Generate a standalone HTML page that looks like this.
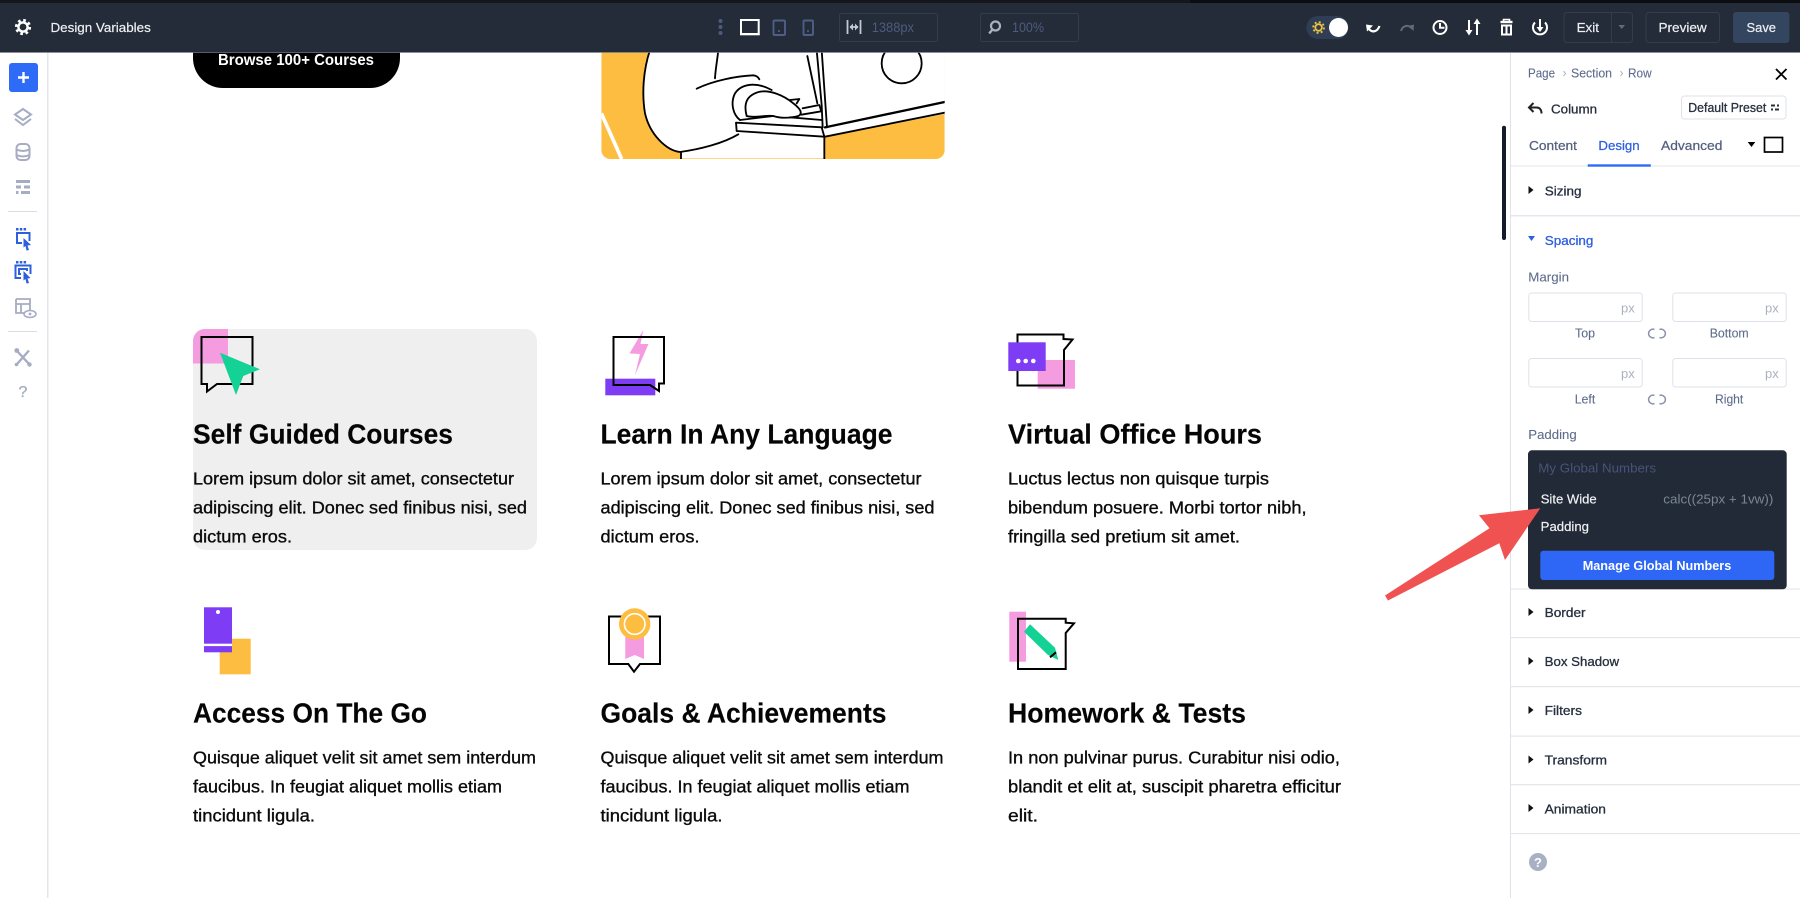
<!DOCTYPE html>
<html lang="en"><head><meta charset="utf-8"><title>Design Variables</title>
<style>
html,body{margin:0;padding:0;background:#fff;width:1800px;height:898px;overflow:hidden}
svg{display:block}
text{font-family:"Liberation Sans",Arial,sans-serif}
.t{font-size:28px;font-weight:700;fill:#050505;stroke:#050505;stroke-width:.15}
.b{font-size:17.5px;fill:#0b0b0b;stroke:#0b0b0b;stroke-width:.35}
.p{font-size:13px;fill:#27303f;stroke:#27303f;stroke-width:.3}
.g{font-size:13px;fill:#5f6c8c;stroke:#5f6c8c;stroke-width:.1}
.s{font-size:12.5px;fill:#5f6c8c;stroke:#5f6c8c;stroke-width:.1}
.w{font-size:13px;fill:#eef0f3;stroke:#eef0f3;stroke-width:.2}
</style></head><body>
<svg width="1800" height="898" viewBox="0 0 1800 898" xmlns="http://www.w3.org/2000/svg">
<rect width="1800" height="898" fill="#fff"/>

<!-- illustration, drawn in 3x crop coordinates -->
<g transform="translate(590,40) scale(.33333)">
<clipPath id="ic"><rect x="34" y="20" width="1030" height="337" rx="27"/></clipPath>
<g clip-path="url(#ic)">
<rect x="34" y="20" width="1030" height="337" fill="#fdbd40"/>
<path d="M180,20 C160,90 155,160 165,220 C180,285 230,332 272,337 L272,355 L703,355 L703,290 L1064,222 L1064,20 Z" fill="#fff"/>
<path d="M34,220 L95,357" stroke="#fff" stroke-width="11" fill="none"/>
<g fill="none" stroke="#000" stroke-width="5.5" stroke-linecap="round" stroke-linejoin="round">
<path d="M180,30 C160,90 155,160 165,220 C180,285 230,332 270,336 C330,328 400,310 445,283"/>
<path d="M273,336 V357"/>
<path d="M385,30 C382,60 376,90 375,115"/>
<path d="M320,146 C370,122 440,108 490,106 C500,107 505,112 508,118"/>
<path d="M545,150 C500,125 455,130 435,160 C420,190 430,225 450,240"/>
<path d="M470,228 C460,190 470,165 510,155 C540,150 580,165 610,190 C630,205 640,220 625,228 C600,235 570,235 550,228 C530,225 490,235 470,228"/>
<path d="M600,180 L628,177 L620,190"/>
<path d="M438,248 L695,262 L703,290 L440,273 Z"/>
<path d="M450,240 L550,228 M600,232 L695,240 M638,205 L688,195 L694,214 L634,224"/>
<path d="M652,48 L682,190"/>
<path d="M680,30 L695,195 L698,262"/>
<path d="M695,30 L711,262"/>
<path d="M705,262 L1064,186" stroke-width="7"/>
<path d="M705,290 L1064,218"/>
<path d="M703,290 V357"/>
<ellipse cx="935" cy="70" rx="60" ry="60"/>
</g></g></g>

<!-- button -->
<rect x="193" y="20" width="207" height="68" rx="30" fill="#000"/>
<text x="218" y="65" font-size="15.5" font-weight="700" fill="#fff" textLength="156" lengthAdjust="spacingAndGlyphs">Browse 100+ Courses</text>

<!-- card 1 -->
<rect x="193" y="329" width="344" height="221" rx="12" fill="#efefef"/>
<path d="M205,329 H228 V363.500 H193 V341 A12,12 0 0 1 205,329 Z" fill="#f59be0"/>
<path d="M201.500,337 H252.500 V384 H217 L207,391.500 V384 H201.500 Z" fill="none" stroke="#000" stroke-width="2"/>
<path d="M220,352.700 L260,369.300 L243.300,376 L236,395 Z" fill="#14d196"/>

<!-- card 2 icon -->
<rect x="605.300" y="378.700" width="50" height="16.600" fill="#7f3cf5"/>
<path d="M643.300,330 L629.500,353.500 L640,354 L635,375 L648.500,344 L640.500,344 Z" fill="#f59be0"/>
<path d="M613.500,337 H664 V383.500 H659 V391 L650,385 H613.500 Z" fill="none" stroke="#000" stroke-width="2"/>

<!-- card 3 icon -->
<rect x="1037.700" y="360" width="37.300" height="28.700" fill="#f59be0"/>
<path d="M1017.500,334.500 H1063.500 V339 L1072.500,339.500 L1064,350 V385.500 H1017.500 Z" fill="none" stroke="#000" stroke-width="2"/>
<rect x="1008.300" y="342.300" width="37.400" height="28.700" fill="#7f3cf5"/>
<circle cx="1018.300" cy="361" r="2.300" fill="#fff"/><circle cx="1025.700" cy="361" r="2.300" fill="#fff"/><circle cx="1033.300" cy="361" r="2.300" fill="#fff"/>

<!-- card 4 icon -->
<rect x="219.700" y="638.700" width="31" height="35.600" fill="#fdbd40"/>
<rect x="204" y="607.300" width="28" height="45" fill="#7f3cf5"/>
<rect x="204" y="643.700" width="28" height="2.400" fill="#fff"/>
<circle cx="218" cy="612" r="2" fill="#fff"/>

<!-- card 5 icon -->
<path d="M609,616.500 H660 V664 H640 L634,671.700 L628.300,664 H609 Z" fill="none" stroke="#000" stroke-width="2"/>
<path d="M625.300,636 H644 V659 L634.700,655 L625.300,659 Z" fill="#f59be0"/>
<circle cx="634.700" cy="624" r="15.700" fill="#fdbd40"/>
<circle cx="634.700" cy="624" r="10.300" fill="#fdbd40" stroke="#fff" stroke-width="1.600"/>

<!-- card 6 icon -->
<rect x="1009.300" y="611.700" width="16.700" height="50" fill="#f59be0"/>
<path d="M1018,618.700 H1065.700 V622.700 L1074,623.300 L1065.700,633 V669 H1018 Z" fill="none" stroke="#000" stroke-width="2"/>
<path d="M1024,631.700 L1030,624.300 L1055,647.700 L1058.300,660 L1048,655 Z" fill="#14d196"/>
<path d="M1050,657.300 L1056,652.300" stroke="#000" stroke-width="2"/>

<!-- titles + text -->
<text class="t" x="193" y="443.500" textLength="260" lengthAdjust="spacingAndGlyphs">Self Guided Courses</text>
<text class="b" x="193" y="484.500" textLength="321" lengthAdjust="spacingAndGlyphs">Lorem ipsum dolor sit amet, consectetur</text>
<text class="b" x="193" y="513.500" textLength="334" lengthAdjust="spacingAndGlyphs">adipiscing elit. Donec sed finibus nisi, sed</text>
<text class="b" x="193" y="542.500" textLength="99" lengthAdjust="spacingAndGlyphs">dictum eros.</text>

<text class="t" x="600.500" y="443.500" textLength="292" lengthAdjust="spacingAndGlyphs">Learn In Any Language</text>
<text class="b" x="600.500" y="484.500" textLength="321" lengthAdjust="spacingAndGlyphs">Lorem ipsum dolor sit amet, consectetur</text>
<text class="b" x="600.500" y="513.500" textLength="334" lengthAdjust="spacingAndGlyphs">adipiscing elit. Donec sed finibus nisi, sed</text>
<text class="b" x="600.500" y="542.500" textLength="99" lengthAdjust="spacingAndGlyphs">dictum eros.</text>

<text class="t" x="1008" y="443.500" textLength="254" lengthAdjust="spacingAndGlyphs">Virtual Office Hours</text>
<text class="b" x="1008" y="484.500" textLength="261" lengthAdjust="spacingAndGlyphs">Luctus lectus non quisque turpis</text>
<text class="b" x="1008" y="513.500" textLength="298.500" lengthAdjust="spacingAndGlyphs">bibendum posuere. Morbi tortor nibh,</text>
<text class="b" x="1008" y="542.500" textLength="232" lengthAdjust="spacingAndGlyphs">fringilla sed pretium sit amet.</text>

<text class="t" x="193" y="722.500" textLength="234" lengthAdjust="spacingAndGlyphs">Access On The Go</text>
<text class="b" x="193" y="763.500" textLength="343" lengthAdjust="spacingAndGlyphs">Quisque aliquet velit sit amet sem interdum</text>
<text class="b" x="193" y="792.500" textLength="309" lengthAdjust="spacingAndGlyphs">faucibus. In feugiat aliquet mollis etiam</text>
<text class="b" x="193" y="821.500" textLength="122" lengthAdjust="spacingAndGlyphs">tincidunt ligula.</text>

<text class="t" x="600.500" y="722.500" textLength="286" lengthAdjust="spacingAndGlyphs">Goals &amp; Achievements</text>
<text class="b" x="600.500" y="763.500" textLength="343" lengthAdjust="spacingAndGlyphs">Quisque aliquet velit sit amet sem interdum</text>
<text class="b" x="600.500" y="792.500" textLength="309" lengthAdjust="spacingAndGlyphs">faucibus. In feugiat aliquet mollis etiam</text>
<text class="b" x="600.500" y="821.500" textLength="122" lengthAdjust="spacingAndGlyphs">tincidunt ligula.</text>

<text class="t" x="1008" y="722.500" textLength="238" lengthAdjust="spacingAndGlyphs">Homework &amp; Tests</text>
<text class="b" x="1008" y="763.500" textLength="332" lengthAdjust="spacingAndGlyphs">In non pulvinar purus. Curabitur nisi odio,</text>
<text class="b" x="1008" y="792.500" textLength="333" lengthAdjust="spacingAndGlyphs">blandit et elit at, suscipit pharetra efficitur</text>
<text class="b" x="1008" y="821.500" textLength="30" lengthAdjust="spacingAndGlyphs">elit.</text>

<!-- scrollbar -->
<rect x="1502" y="125.700" width="4" height="114.300" rx="2" fill="#141b2d"/>

<!-- left sidebar -->
<rect x="0" y="52" width="47" height="846" fill="#fff"/>
<rect x="47" y="52" width="1.500" height="846" fill="#e4e6eb"/>
<rect x="9" y="63" width="29" height="29" rx="3" fill="#2e6bf6"/>
<path d="M23.500,72 V83 M18,77.500 H29" stroke="#fff" stroke-width="2.400"/>
<g fill="none" stroke="#a6acc2" stroke-width="2">
<path d="M23,109 L31,114.500 L23,120 L15,114.500 Z"/>
<path d="M15,119 L23,125 L31,119"/>
<rect x="16.500" y="144" width="13" height="16" rx="4"/>
<path d="M16.500,149.500 q6.500,3 13,0 M16.500,155 q6.500,3 13,0"/>
<path d="M16,299 H30 V310 M16,299 V313 H25 M16,304 H30 M21,304 V313" stroke-width="1.800"/>
<ellipse cx="30" cy="314" rx="6" ry="3.500" stroke-width="1.600"/>
<path d="M18,352 L29,364 M29,350.500 L17.500,363.500" stroke-width="2.400"/>
</g>
<circle cx="30" cy="314" r="1.400" fill="#a6acc2"/>
<circle cx="16.800" cy="350.500" r="2.400" fill="#a6acc2"/><circle cx="29.500" cy="364.500" r="2.200" fill="#a6acc2"/><circle cx="16.500" cy="364.500" r="1.800" fill="#a6acc2"/>
<g fill="#a6acc2">
<rect x="16" y="180" width="14" height="3"/><rect x="16" y="185.500" width="5" height="3"/><rect x="24" y="185.500" width="6" height="3"/><rect x="16" y="191" width="2.500" height="3"/><rect x="21" y="191" width="9" height="3"/>
</g>
<rect x="8" y="211" width="29" height="1" fill="#d9dce3"/>
<rect x="8" y="331" width="29" height="1" fill="#d9dce3"/>
<g fill="#2e5fdc">
<rect x="16" y="228" width="2.500" height="2.500"/><rect x="19.800" y="228" width="2.500" height="2.500"/><rect x="23.600" y="228" width="2.500" height="2.500"/>
<path d="M23.500,238 L31,245 L27.500,245.500 L29,250 L26.500,250.500 L25.500,246 L23.500,247.500 Z"/>
<rect x="16" y="261" width="2.500" height="2.500"/><rect x="19.800" y="261" width="2.500" height="2.500"/><rect x="23.600" y="261" width="2.500" height="2.500"/>
<path d="M23.500,271 L30.500,278 L27.500,278.500 L29,283 L26.500,283.500 L25.500,279 L23.500,280.500 Z"/>
</g>
<g fill="none" stroke="#2e5fdc" stroke-width="2">
<path d="M22,243 H17 V233 H29.500 V241"/>
<path d="M21,278 H15.500 V265.500 H30.500 V274"/>
<path d="M21,274 H19 V269 H27 V271"/>
</g>
<text x="23" y="397" font-size="16" fill="#a6acc2" stroke="#a6acc2" stroke-width=".3" text-anchor="middle">?</text>

<!-- header -->
<rect width="1800" height="52" fill="#232c38"/>
<rect width="1800" height="3" fill="#15171b"/>
<rect x="1190" width="610" height="3" fill="#0b0d10"/>
<rect y="52" width="1800" height=".8" fill="#6f7680"/>
<circle cx="23" cy="27" r="6.800" fill="none" stroke="#fff" stroke-width="2.600" stroke-dasharray="2.670 2.670"/>
<circle cx="23" cy="27" r="4.600" fill="none" stroke="#fff" stroke-width="2.400"/>
<text class="w" x="50.500" y="32" textLength="100.300" lengthAdjust="spacingAndGlyphs">Design Variables</text>

<circle cx="720.500" cy="21" r="2" fill="#4e5b7e"/><circle cx="720.500" cy="27" r="2" fill="#4e5b7e"/><circle cx="720.500" cy="33" r="2" fill="#4e5b7e"/>
<path d="M741,20 H758.700 V34 H741 Z" fill="none" stroke="#fff" stroke-width="2"/>
<rect x="740" y="33.500" width="19.700" height="1.800" fill="#fff"/>
<rect x="773.500" y="20.500" width="11.500" height="14.500" rx="1" fill="none" stroke="#4e5f86" stroke-width="1.900"/>
<rect x="803.500" y="20.500" width="9.500" height="14.500" rx="1" fill="none" stroke="#4e5f86" stroke-width="1.900"/>
<circle cx="779" cy="31" r=".8" fill="#7a89a8"/><circle cx="808" cy="31" r=".8" fill="#7a89a8"/>

<rect x="839.500" y="13.500" width="98" height="28" rx="2" fill="none" stroke="#333d52"/>
<path d="M847.500,20 V34 M860.500,20 V34 M850,27 H858" stroke="#c3c9d4" stroke-width="1.800" fill="none"/>
<path d="M849.500,27 L853,23.500 V30.500 Z M858.500,27 L855,23.500 V30.500 Z" fill="#c3c9d4"/>
<text x="871.700" y="32" font-size="13.500" fill="#4e5b7e" textLength="42.300" lengthAdjust="spacingAndGlyphs">1388px</text>
<rect x="980.500" y="13.500" width="98" height="28" rx="2" fill="none" stroke="#333d52"/>
<circle cx="995.500" cy="26" r="4.500" fill="none" stroke="#aab1bd" stroke-width="2.200"/>
<path d="M992,30 L989.200,33.500" stroke="#aab1bd" stroke-width="2.400"/>
<text x="1012" y="32" font-size="13.500" fill="#4e5b7e" textLength="32" lengthAdjust="spacingAndGlyphs">100%</text>

<rect x="1306.400" y="16" width="42.100" height="23" rx="11.500" fill="#2f3e55"/>
<circle cx="1318.600" cy="27.500" r="3.300" fill="none" stroke="#eec43c" stroke-width="1.800"/>
<circle cx="1318.600" cy="27.500" r="5.400" fill="none" stroke="#eec43c" stroke-width="1.800" stroke-dasharray="2 2.240"/>
<circle cx="1338.500" cy="27.500" r="9.500" fill="#fff"/>

<path d="M1369,29 C1372,32.500 1377,32.500 1379.500,26" fill="none" stroke="#fff" stroke-width="2.200"/>
<path d="M1366,24.500 L1373,25.500 L1367,31.500 Z" fill="#fff"/>
<path d="M1401,31 C1402.500,25.500 1408,24.500 1411.500,28" fill="none" stroke="#5f6a7d" stroke-width="2"/>
<path d="M1414,24.500 L1408,26 L1413.500,31 Z" fill="#5f6a7d"/>
<g fill="none" stroke="#fff" stroke-width="2">
<circle cx="1440" cy="27.500" r="6.500"/>
<path d="M1440,23 V27.800 H1444.500"/>
<path d="M1469,20 V33 M1477,35 V22"/>
<path d="M1500.500,22 H1512.500" stroke-width="2.400"/>
<path d="M1503.500,21 V19.500 H1509.500 V21" stroke-width="1.600"/>
<path d="M1502,25.500 H1511 V34.500 H1502 Z"/>
<path d="M1506.500,26 V34"/>
<path d="M1535,22.500 A7,7 0 1 0 1545,22.500" stroke-width="2"/>
<path d="M1540,19 V28" stroke-width="2"/>
</g>
<path d="M1465.500,30 H1472.500 L1469,35.500 Z M1473.500,24 H1480.500 L1477,18.500 Z M1536.500,27 H1543.500 L1540,32 Z" fill="#fff"/>

<rect x="1564" y="12.500" width="68.500" height="30" rx="3" fill="none" stroke="#333d4d"/>
<rect x="1611" y="12.500" width="1" height="30" fill="#333d4d"/>
<path d="M1618.500,25 H1625 L1621.700,29 Z" fill="#5f6a7d"/>
<text class="w" x="1576.600" y="32" textLength="22.400" lengthAdjust="spacingAndGlyphs">Exit</text>
<rect x="1646" y="12.500" width="73.500" height="30" rx="3" fill="none" stroke="#333d4d"/>
<text class="w" x="1658.500" y="32" textLength="48.200" lengthAdjust="spacingAndGlyphs">Preview</text>
<rect x="1733" y="12" width="56.400" height="31" rx="3" fill="#33455f"/>
<text class="w" x="1746.500" y="32" textLength="29.500" lengthAdjust="spacingAndGlyphs">Save</text>

<!-- right panel -->
<rect x="1510" y="53" width="290" height="845" fill="#fff"/>
<rect x="1510" y="53" width="1" height="845" fill="#dfe2e8"/>
<text class="s" x="1528" y="77.500" textLength="27" lengthAdjust="spacingAndGlyphs">Page</text>
<text class="s" x="1571" y="77.500" textLength="41" lengthAdjust="spacingAndGlyphs">Section</text>
<text class="s" x="1628" y="77.500" textLength="23.600" lengthAdjust="spacingAndGlyphs">Row</text>
<path d="M1563.500,71 L1565.500,73.500 L1563.500,76 M1620.500,71 L1622.500,73.500 L1620.500,76" fill="none" stroke="#aab0c2" stroke-width="1"/>
<path d="M1776,69 L1786.500,79.500 M1786.500,69 L1776,79.500" stroke="#000" stroke-width="1.800"/>
<path d="M1533.500,103 L1529,107.500 L1533.500,112 M1529,107.500 H1536.500 C1540,107.500 1541.500,110 1541.500,113.500" fill="none" stroke="#222" stroke-width="2"/>
<text class="p" x="1551" y="113.500" textLength="46" lengthAdjust="spacingAndGlyphs">Column</text>
<rect x="1681.500" y="96" width="104.500" height="23" rx="3" fill="#fff" stroke="#dfe2e8"/>
<text class="p" x="1688.300" y="112" textLength="78" style="font-size:12.500px" lengthAdjust="spacingAndGlyphs">Default Preset</text>
<path d="M1771,104.500 H1775 V106.500 H1771 Z M1777,104.500 H1779 V106.500 H1777 Z M1771,108.500 H1773 V110.500 H1771 Z M1775,108.500 H1779 V110.500 H1775 Z" fill="#27303f"/>

<text class="g" x="1529" y="150" textLength="48" lengthAdjust="spacingAndGlyphs" style="fill:#55617f;stroke:#55617f;stroke-width:.25">Content</text>
<text class="g" x="1598.400" y="150" textLength="41.300" lengthAdjust="spacingAndGlyphs" style="fill:#2e5fdc;stroke:#2e5fdc;stroke-width:.25">Design</text>
<text class="g" x="1661" y="150" textLength="61.400" lengthAdjust="spacingAndGlyphs" style="fill:#55617f;stroke:#55617f;stroke-width:.25">Advanced</text>
<path d="M1747.700,142 H1755.300 L1751.500,147 Z" fill="#000"/>
<rect x="1764.500" y="137.500" width="18" height="14.500" fill="none" stroke="#000" stroke-width="1.700"/>
<rect x="1511" y="165.500" width="289" height="1" fill="#e2e5ea"/>
<rect x="1587.700" y="164.300" width="63.100" height="2.400" fill="#2e6bf6"/>

<path d="M1528.500,186 L1533.500,190 L1528.500,194 Z" fill="#111"/>
<text class="p" x="1544.800" y="195.500" textLength="36.700" lengthAdjust="spacingAndGlyphs">Sizing</text>
<rect x="1511" y="215" width="289" height="1.500" fill="#e5e7ec"/>
<path d="M1528,236 H1535 L1531.500,241 Z" fill="#2e5fdc"/>
<text class="p" x="1544.800" y="245" textLength="48.600" lengthAdjust="spacingAndGlyphs" style="fill:#2e5fdc;stroke:#2e5fdc">Spacing</text>
<text class="g" x="1528.300" y="281.500" textLength="40.700" lengthAdjust="spacingAndGlyphs">Margin</text>

<g fill="#fff" stroke="#dfe2ea"><rect x="1528.800" y="293" width="113.400" height="28.500" rx="3"/><rect x="1672.800" y="293" width="113.400" height="28.500" rx="3"/><rect x="1528.800" y="358.500" width="113.400" height="28.500" rx="3"/><rect x="1672.800" y="358.500" width="113.400" height="28.500" rx="3"/></g>
<g font-size="12.500" fill="#aab0be">
<text x="1621" y="312.500" textLength="13.700" lengthAdjust="spacingAndGlyphs">px</text>
<text x="1765" y="312.500" textLength="13.700" lengthAdjust="spacingAndGlyphs">px</text>
<text x="1621" y="378" textLength="13.700" lengthAdjust="spacingAndGlyphs">px</text>
<text x="1765" y="378" textLength="13.700" lengthAdjust="spacingAndGlyphs">px</text>
</g>
<text class="s" x="1575" y="337.300" textLength="20" lengthAdjust="spacingAndGlyphs">Top</text>
<text class="s" x="1709.700" y="337.300" textLength="39" lengthAdjust="spacingAndGlyphs">Bottom</text>
<text class="s" x="1574.700" y="403.300" textLength="20.600" lengthAdjust="spacingAndGlyphs">Left</text>
<text class="s" x="1715" y="403.300" textLength="28.300" lengthAdjust="spacingAndGlyphs">Right</text>
<g fill="none" stroke="#8a93ab" stroke-width="1.500">
<path d="M1654.500,329.500 A4.300,4.300 0 1 0 1654.500,337.500 M1659.500,329.500 A4.300,4.300 0 1 1 1659.500,337.500"/>
<path d="M1654.500,395.500 A4.300,4.300 0 1 0 1654.500,403.500 M1659.500,395.500 A4.300,4.300 0 1 1 1659.500,403.500"/>
</g>
<text class="g" x="1528.300" y="439" textLength="48.400" lengthAdjust="spacingAndGlyphs">Padding</text>

<rect x="1511" y="588.500" width="289" height="1" fill="#e0e3e8"/>
<rect x="1528" y="450.300" width="258.700" height="139" rx="4" fill="#212a36"/>
<text x="1538.300" y="472.300" font-size="13" fill="#47537a" textLength="117.700" lengthAdjust="spacingAndGlyphs">My Global Numbers</text>
<text class="w" x="1540.700" y="503.500" textLength="56" lengthAdjust="spacingAndGlyphs">Site Wide</text>
<text x="1663.300" y="503.500" font-size="13" fill="#7d8694" textLength="110" lengthAdjust="spacingAndGlyphs">calc((25px + 1vw))</text>
<text class="w" x="1540.700" y="531" textLength="48.300" lengthAdjust="spacingAndGlyphs">Padding</text>
<rect x="1540.300" y="550.700" width="234" height="29.300" rx="3" fill="#2e66f6"/>
<text x="1582.700" y="570" font-size="13" font-weight="700" fill="#fff" textLength="148.600" lengthAdjust="spacingAndGlyphs">Manage Global Numbers</text>

<path d="M1540.300,508.300 L1479,515.300 L1489.500,528.300 L1385,595.500 L1388,600.500 L1499.300,543.300 L1505,560 Z" fill="#f05252"/>

<g><path d="M1528.500,608 L1533.500,612 L1528.500,616 Z M1528.500,657 L1533.500,661 L1528.500,665 Z M1528.500,706 L1533.500,710 L1528.500,714 Z M1528.500,755.500 L1533.500,759.500 L1528.500,763.500 Z M1528.500,804 L1533.500,808 L1528.500,812 Z" fill="#111"/></g>
<text class="p" x="1544.600" y="617" textLength="41" lengthAdjust="spacingAndGlyphs">Border</text>
<text class="p" x="1544.600" y="666" textLength="74.500" lengthAdjust="spacingAndGlyphs">Box Shadow</text>
<text class="p" x="1544.600" y="715" textLength="37.400" lengthAdjust="spacingAndGlyphs">Filters</text>
<text class="p" x="1544.600" y="764.500" textLength="62.400" lengthAdjust="spacingAndGlyphs">Transform</text>
<text class="p" x="1544.600" y="813.500" textLength="61.400" lengthAdjust="spacingAndGlyphs">Animation</text>
<g fill="#e5e7ec"><rect x="1511" y="637" width="289" height="1.200"/><rect x="1511" y="686" width="289" height="1.200"/><rect x="1511" y="735.500" width="289" height="1.200"/><rect x="1511" y="784" width="289" height="1.200"/><rect x="1511" y="833" width="289" height="1.200"/></g>
<circle cx="1538" cy="862" r="9" fill="#a8b0c4"/>
<text x="1538" y="867" font-size="13" font-weight="700" fill="#fff" text-anchor="middle">?</text>
</svg>
</body></html>
